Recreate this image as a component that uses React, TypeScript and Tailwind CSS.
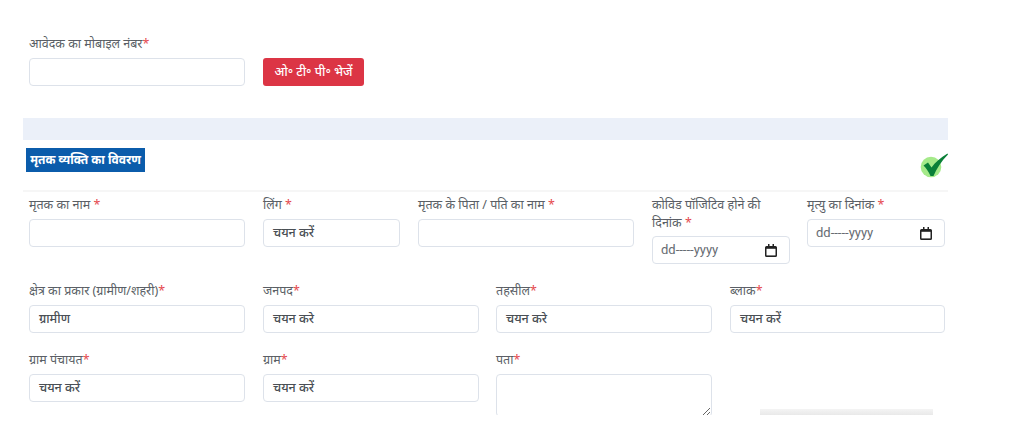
const fontStack = { fontFamily: '"Noto Sans", "Noto Sans Devanagari", "Lohit Devanagari", "Liberation Sans", sans-serif' };

function Label({ text, spaced }: { text: string; spaced?: boolean }) {
  return (
    <label className="block text-[12.5px] leading-[18px] text-[#5a5f66] mb-[5px]">
      {text}
      {spaced ? " " : ""}
      <span className="text-[#e5484d]">*</span>
    </label>
  );
}

function TextField({ label, spaced, width = "w-[216px]" }: { label: string; spaced?: boolean; width?: string }) {
  return (
    <div className={width}>
      <Label text={label} spaced={spaced} />
      <input className="block w-full h-[28px] bg-white border border-[#dde2ea] rounded-[4px] outline-none" />
    </div>
  );
}

function SelectField({ label, value, spaced, width = "w-[216px]" }: { label: string; value: string; spaced?: boolean; width?: string }) {
  return (
    <div className={width}>
      <Label text={label} spaced={spaced} />
      <div className="h-[28px] bg-white border border-[#dde2ea] rounded-[4px] pl-[9px] flex items-center text-[12.5px] font-medium text-[#4a4f55]">
        {value}
      </div>
    </div>
  );
}

function CalendarIcon() {
  return (
    <svg width="12" height="13" viewBox="0 0 12 13" className="shrink-0">
      <path d="M3 0h1.5v2h3V0H9v2h1.5A1.5 1.5 0 0 1 12 3.5v8a1.5 1.5 0 0 1-1.5 1.5h-9A1.5 1.5 0 0 1 0 11.5v-8A1.5 1.5 0 0 1 1.5 2H3z" fill="#222" />
      <rect x="1.5" y="4.8" width="9" height="6.6" fill="#fff" />
    </svg>
  );
}

function DateField({ children }: { children: React.ReactNode }) {
  return (
    <div className="w-[138px]">
      {children}
      <div className="h-[28px] bg-white border border-[#dde2ea] rounded-[4px] pl-[8px] pr-[12px] flex items-center justify-between text-[13px] text-[#666b72]">
        <span style={{ fontFamily: '"Roboto", sans-serif' }}>dd-----yyyy</span>
        <CalendarIcon />
      </div>
    </div>
  );
}

export default function App() {
  return (
    <div className="w-[1024px] h-[432px] bg-white overflow-hidden" style={fontStack}>
      <div className="w-[925px] h-[415px] ml-[23px] overflow-hidden relative">
        {/* Mobile number + OTP */}
        <div className="pt-[35px] pl-[6px] flex items-end gap-[18px]">
          <TextField label="आवेदक का मोबाइल नंबर" />
          <button className="w-[101px] h-[28px] bg-[#dc3545] rounded-[3px] text-white text-[12.5px] font-medium">
            ओ॰ टी॰ पी॰ भेजें
          </button>
        </div>

        <div className="mt-[32px] h-[22px] bg-[#ebf0f9]" />

        {/* Section heading */}
        <div className="h-[52px] pt-[8px] pl-[3px] pr-0 flex justify-between items-start border-b-2 border-[#f6f6f6]">
          <div className="w-[119px] h-[24px] bg-[#0b5cab] text-white text-[12px] font-bold flex items-center justify-center">
            मृतक व्यक्ति का विवरण
          </div>
          <svg width="28" height="26" viewBox="0 0 28 26" className="mt-[5px]">
            <circle cx="11" cy="14" r="10.3" fill="#a5ea8a" />
            <path d="M3.5 12.5 L8 9.5 L11.5 14.5 C15 9.5 20.5 4.5 27.5 0.5 L28 1.5 C21.5 8 16.5 15.5 13.5 23 L10.5 23 C8.5 18.5 6 15 3.5 12.5 Z" fill="#0a8038" />
          </svg>
        </div>

        {/* Row 1 */}
        <div className="pl-[6px] pt-[4px] flex items-start">
          <div className="mr-[18px]"><TextField label="मृतक का नाम" spaced /></div>
          <div className="mr-[18px]"><SelectField label="लिंग" value="चयन करें" spaced width="w-[137px]" /></div>
          <div className="mr-[18px]"><TextField label="मृतक के पिता / पति का नाम" spaced /></div>
          <div className="mr-[17px]">
            <DateField>
              <label className="block text-[12.5px] leading-[18px] text-[#5a5f66] mb-[4px] pr-[20px]">
                कोविड पॉजिटिव होने की दिनांक <span className="text-[#e5484d]">*</span>
              </label>
            </DateField>
          </div>
          <DateField><Label text="मृत्यु का दिनांक" spaced /></DateField>
        </div>

        {/* Row 2 */}
        <div className="pl-[6px] mt-[18px] flex">
          <div className="mr-[18px]"><SelectField label="क्षेत्र का प्रकार (ग्रामीण/शहरी)" value="ग्रामीण" /></div>
          <div className="mr-[17px]"><SelectField label="जनपद" value="चयन करे" /></div>
          <div className="mr-[18px]"><SelectField label="तहसील" value="चयन करे" /></div>
          <SelectField label="ब्लाक" value="चयन करें" width="w-[215px]" />
        </div>

        {/* Row 3 */}
        <div className="pl-[6px] mt-[18px] flex">
          <div className="mr-[18px]"><SelectField label="ग्राम पंचायत" value="चयन करें" /></div>
          <div className="mr-[17px]"><SelectField label="ग्राम" value="चयन करें" /></div>
          <div className="w-[216px]">
            <Label text="पता" />
            <textarea className="block w-full h-[43px] bg-white border border-[#dde2ea] rounded-[4px] outline-none" />
          </div>
        </div>

        {/* Cut-off toolbar at the bottom edge */}
        <div className="absolute left-[737px] bottom-0 w-[173px] h-[6px] bg-linear-to-b from-[#f4f4f4] to-[#e9e9e9]" />
      </div>
    </div>
  );
}
